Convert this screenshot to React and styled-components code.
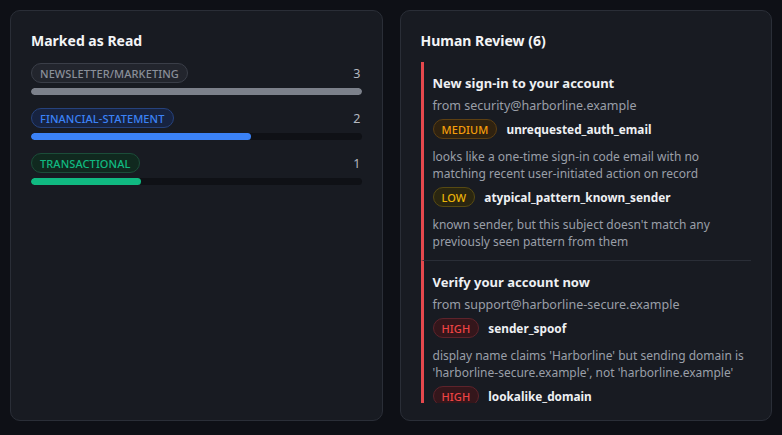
import styled, { createGlobalStyle } from "styled-components";

const GlobalStyle = createGlobalStyle`
    html, body {
        margin: 0;
        padding: 0;
        background: #0e1016;
    }
    body {
        font-family: "Noto Sans", "Liberation Sans", sans-serif;
        color: #e6e8ec;
    }
`;

const Page = styled.div`
    display: grid;
    grid-template-columns: 1fr 1fr;
    gap: 17px;
    padding: 10px 10px 14px;
    height: 435px;
    box-sizing: border-box;
`;

const Card = styled.section`
    background: #181b22;
    border: 1px solid #2a2e37;
    border-radius: 10px;
    padding: 20px 20px 17px;
    display: flex;
    flex-direction: column;
    min-height: 0;
    box-sizing: border-box;
`;

const CardTitle = styled.h2`
    margin: 0 0 12px;
    font-size: 14px;
    font-weight: 700;
    color: #f3f4f6;
    line-height: 19px;
`;

const Stats = styled.div`
    display: flex;
    flex-direction: column;
    gap: 13px;
    padding-top: 1px;
`;

const StatRow = styled.div`
    display: flex;
    flex-direction: column;
    gap: 5px;
`;

const StatHead = styled.div`
    display: flex;
    align-items: center;
    justify-content: space-between;
`;

const tones = {
    gray: { bg: "#22252d", border: "#3a3e48", fg: "#8a8f99", bar: "#7c818b" },
    blue: { bg: "#172340", border: "#26427d", fg: "#3b82f6", bar: "#3b82f6" },
    green: { bg: "#10291f", border: "#1b4d39", fg: "#10b981", bar: "#10b981" },
    medium: { bg: "#2f2210", border: "#5c3f12", fg: "#f59e0b" },
    low: { bg: "#2a2610", border: "#574a12", fg: "#eab308" },
    high: { bg: "#34161b", border: "#5e232b", fg: "#ef4444" },
};

const Pill = styled.span`
    display: inline-flex;
    align-items: center;
    height: 20px;
    padding: 0 8px;
    border-radius: 999px;
    box-sizing: border-box;
    font-size: 11px;
    font-weight: 500;
    letter-spacing: 0.1px;
    text-transform: uppercase;
    background: ${(p) => tones[p.$tone].bg};
    border: 1px solid ${(p) => tones[p.$tone].border};
    color: ${(p) => tones[p.$tone].fg};
    flex-shrink: 0;
`;

const Count = styled.span`
    font-size: 12.5px;
    color: #b4b8c0;
    padding-right: 1px;
`;

const Track = styled.div`
    height: 7px;
    border-radius: 4px;
    background: #0f1116;
    overflow: hidden;
`;

const Fill = styled.div`
    height: 100%;
    border-radius: 4px;
    background: ${(p) => tones[p.$tone].bar};
`;

const ReviewList = styled.div`
    flex: 1;
    min-height: 0;
    overflow: hidden;
`;

const Item = styled.article`
    border-left: 3px solid #e5484d;
    border-bottom: 1px solid #2a2e37;
    padding: 12px 0 10px 9px;
`;

const Subject = styled.div`
    font-size: 13px;
    font-weight: 700;
    color: #eef0f3;
    line-height: 18px;
`;

const From = styled.div`
    font-size: 12.5px;
    color: #9a9fa8;
    line-height: 17px;
    margin-top: 5px;
`;

const Flag = styled.div`
    margin-top: 5px;
`;

const FlagHead = styled.div`
    display: flex;
    align-items: center;
    gap: 9px;
`;

const FlagName = styled.span`
    font-size: 11.8px;
    font-weight: 700;
    color: #eef0f3;
`;

const FlagDesc = styled.div`
    font-size: 12px;
    color: #9a9fa8;
    line-height: 17px;
    margin-top: 9px;
`;

const stats = [
    { label: "newsletter/marketing", count: 3, tone: "gray" },
    { label: "financial-statement", count: 2, tone: "blue" },
    { label: "transactional", count: 1, tone: "green" },
];

const reviews = [
    {
        subject: "New sign-in to your account",
        from: "security@harborline.example",
        flags: [
            {
                level: "medium",
                name: "unrequested_auth_email",
                desc: "looks like a one-time sign-in code email with no matching recent user-initiated action on record",
            },
            {
                level: "low",
                name: "atypical_pattern_known_sender",
                desc: "known sender, but this subject doesn't match any previously seen pattern from them",
            },
        ],
    },
    {
        subject: "Verify your account now",
        from: "support@harborline-secure.example",
        flags: [
            {
                level: "high",
                name: "sender_spoof",
                desc: "display name claims 'Harborline' but sending domain is 'harborline-secure.example', not 'harborline.example'",
            },
            {
                level: "high",
                name: "lookalike_domain",
                desc: "sending domain closely resembles a known sender domain",
            },
        ],
    },
];

const max = Math.max(...stats.map((s) => s.count));

const App = () => {
    return (
        <>
            <GlobalStyle />
            <Page>
                <Card>
                    <CardTitle>Marked as Read</CardTitle>
                    <Stats>
                        {stats.map((s) => (
                            <StatRow key={s.label}>
                                <StatHead>
                                    <Pill $tone={s.tone}>{s.label}</Pill>
                                    <Count>{s.count}</Count>
                                </StatHead>
                                <Track>
                                    <Fill
                                        $tone={s.tone}
                                        style={{ width: `${(s.count / max) * 100}%` }}
                                    />
                                </Track>
                            </StatRow>
                        ))}
                    </Stats>
                </Card>
                <Card>
                    <CardTitle>Human Review (6)</CardTitle>
                    <ReviewList>
                        {reviews.map((r) => (
                            <Item key={r.subject}>
                                <Subject>{r.subject}</Subject>
                                <From>from {r.from}</From>
                                {r.flags.map((f) => (
                                    <Flag key={f.name}>
                                        <FlagHead>
                                            <Pill $tone={f.level}>{f.level}</Pill>
                                            <FlagName>{f.name}</FlagName>
                                        </FlagHead>
                                        <FlagDesc>{f.desc}</FlagDesc>
                                    </Flag>
                                ))}
                            </Item>
                        ))}
                    </ReviewList>
                </Card>
            </Page>
        </>
    );
};

export default App;
